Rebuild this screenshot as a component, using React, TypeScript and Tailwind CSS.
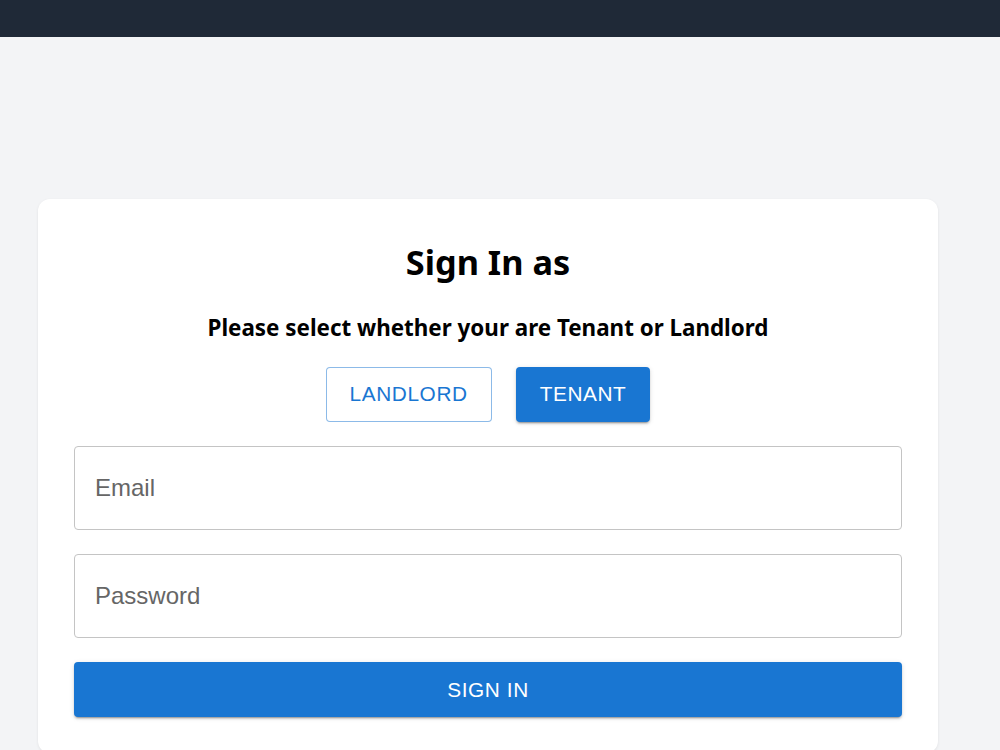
import React, { useState } from "react";

const heading = { fontFamily: '"Noto Sans", "Open Sans", sans-serif' };
const body = { fontFamily: '"Liberation Sans", Arial, sans-serif' };

export default function App() {
  const [role, setRole] = useState<"landlord" | "tenant">("tenant");

  const base =
    "h-[55px] rounded-[4px] text-[20.8px] tracking-[0.6px] leading-none uppercase flex items-center justify-center";
  const active =
    "bg-[#1976d2] text-white px-6 shadow-[0_3px_1px_-2px_rgba(0,0,0,0.2),0_2px_2px_0_rgba(0,0,0,0.14),0_1px_5px_0_rgba(0,0,0,0.12)]";
  const idle = "bg-white text-[#1976d2] border border-[rgba(25,118,210,0.5)] px-[23px]";

  return (
    <div className="min-h-screen bg-[#f3f4f6]" style={body}>
      <nav className="h-[37px] bg-[#1f2937]" />
      <main className="pt-[162px] pl-[38px]">
        <div className="w-[900px] bg-white rounded-xl shadow-[0_1px_3px_rgba(0,0,0,0.08)] px-9 pt-[43px] pb-9 flex flex-col items-center">
          <h1 className="text-[34.3px] font-bold leading-[40px] text-black" style={heading}>
            Sign In as
          </h1>
          <p className="mt-[32px] text-[22.4px] font-bold leading-[28px] text-black" style={heading}>
            Please select whether your are Tenant or Landlord
          </p>
          <div className="mt-[25px] flex gap-6">
            <button
              className={`${base} ${role === "landlord" ? active : idle}`}
              onClick={() => setRole("landlord")}
            >
              Landlord
            </button>
            <button
              className={`${base} ${role === "tenant" ? active : idle}`}
              onClick={() => setRole("tenant")}
            >
              Tenant
            </button>
          </div>
          <form className="mt-6 w-full flex flex-col gap-6" onSubmit={(e) => e.preventDefault()}>
            <input
              type="email"
              placeholder="Email"
              className="h-[84px] w-full rounded-[4px] border border-[#c4c4c4] px-[20px] text-[24px] text-black placeholder:text-[#666666] outline-none"
            />
            <input
              type="password"
              placeholder="Password"
              className="h-[84px] w-full rounded-[4px] border border-[#c4c4c4] px-[20px] text-[24px] text-black placeholder:text-[#666666] outline-none"
            />
            <button
              type="submit"
              className="h-[55px] w-full rounded-[4px] bg-[#1976d2] text-white text-[20.8px] tracking-[0.6px] uppercase shadow-[0_3px_1px_-2px_rgba(0,0,0,0.2),0_2px_2px_0_rgba(0,0,0,0.14),0_1px_5px_0_rgba(0,0,0,0.12)]"
            >
              Sign In
            </button>
          </form>
        </div>
      </main>
    </div>
  );
}
